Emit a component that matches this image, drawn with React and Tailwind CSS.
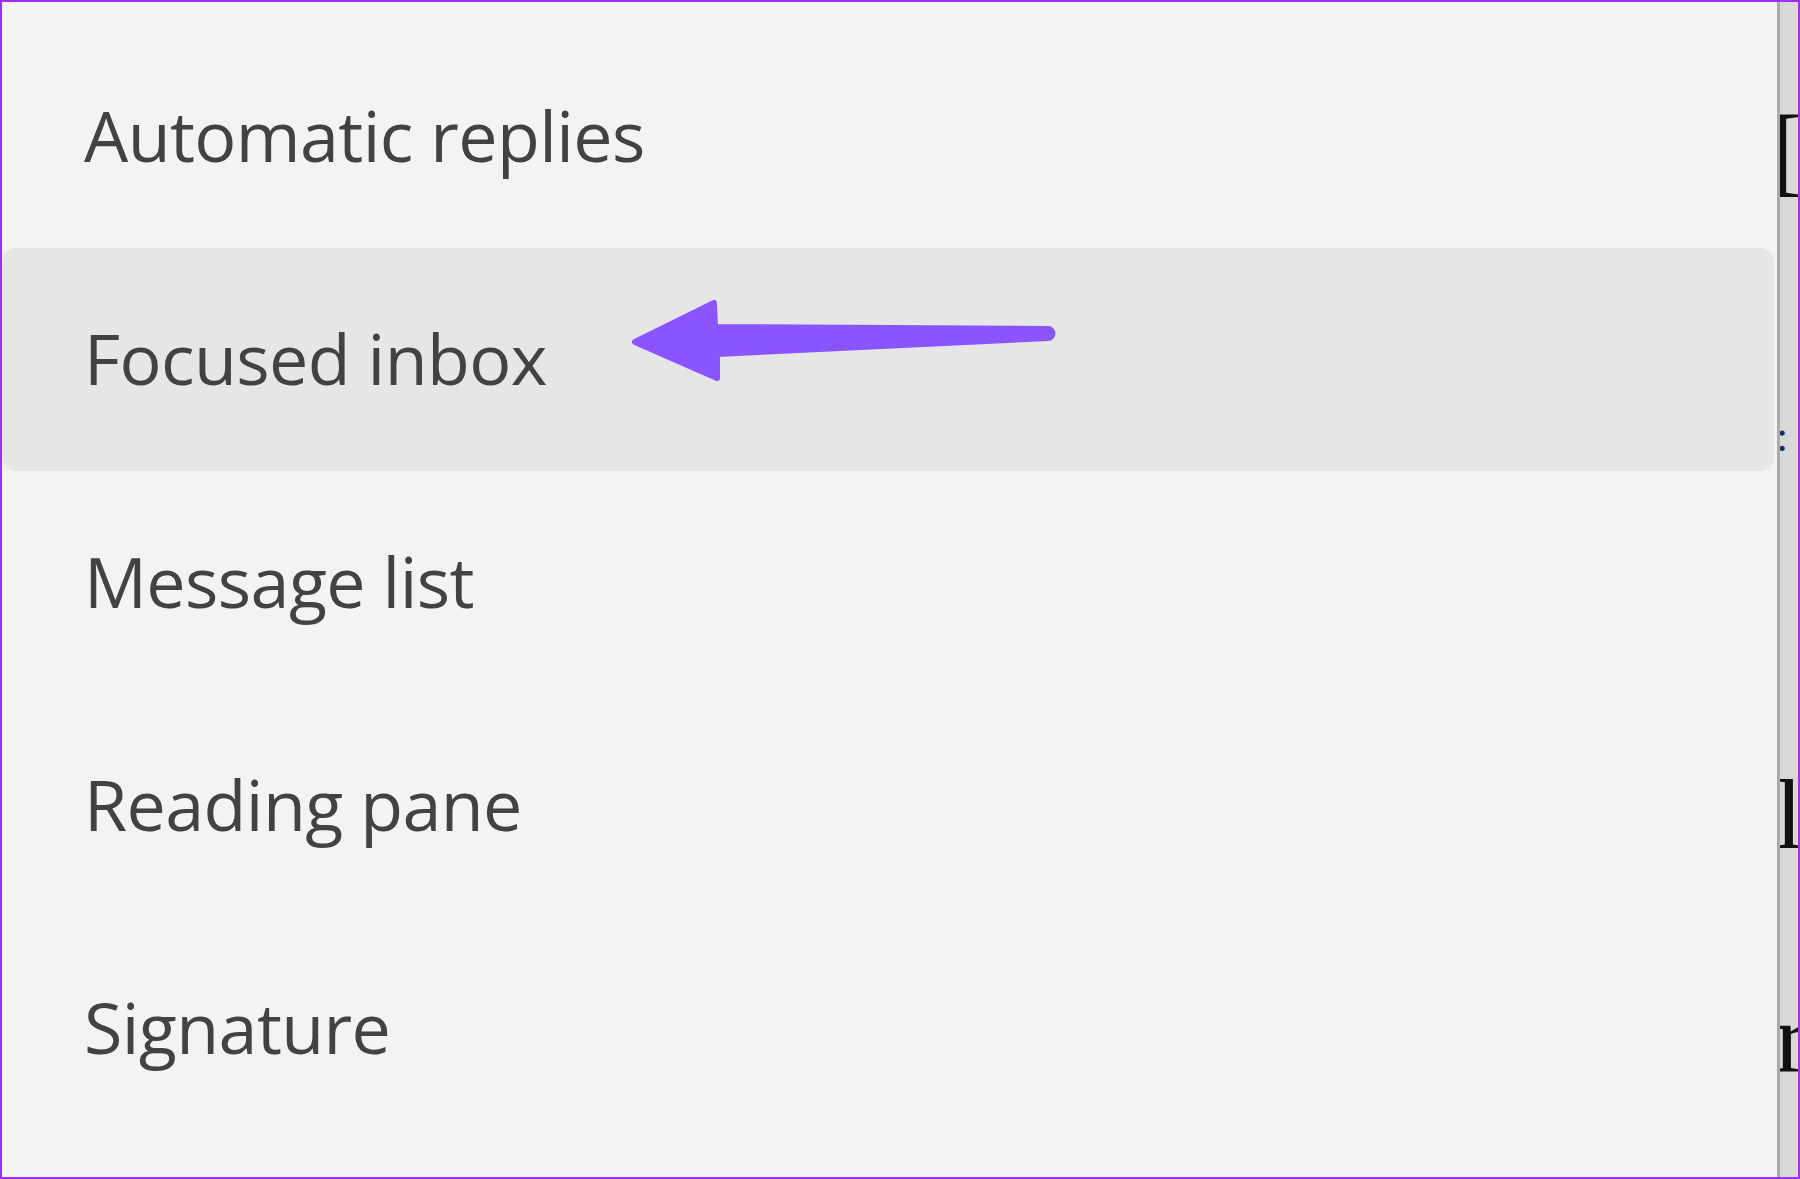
import React from "react";

const rows = ["Automatic replies", "Focused inbox", "Message list", "Reading pane", "Signature"];

const Arrow = () => (
  <svg className="absolute left-0 top-0 pointer-events-none" width="1100" height="224" viewBox="0 0 1100 224">
    <path
      d="M633 94 L712 55 L713 79 L1046 81 A4.5 4.5 0 0 1 1046 90 L715 106 L715 130 Z"
      fill="#8b55fd"
      stroke="#8b55fd"
      strokeWidth="6"
      strokeLinejoin="round"
    />
  </svg>
);

const SideStrip = () => (
  <div
    className="w-[21px] shrink-0 overflow-hidden bg-[#d8d8d8] border-l-[3px] border-[#ababab] flex flex-col text-[#111] leading-[100px] text-[100px]"
    style={{ fontFamily: '"Liberation Serif", serif' }}
  >
    <div className="mt-[99px] ml-[-9px]">[</div>
    <div className="mt-[214px] ml-[-4px] text-[44px] leading-[44px] text-[#1d2a5a]">:</div>
    <div className="mt-[306px] ml-[-5px]">l</div>
    <div className="mt-[124px] ml-[-5px]">r</div>
  </div>
);

export default function App() {
  return (
    <div className="w-[1800px] h-[1179px] border-2 border-[#a02ef6] bg-[#f3f3f3] flex overflow-hidden">
      <div className="flex-1 flex flex-col pt-[23px] pr-[3px]">
        {rows.map((label, i) => (
          <div
            key={label}
            className={
              "relative h-[223px] shrink-0 flex items-center pl-[82px] pb-[3px] rounded-[14px] " +
              (i === 1 ? "bg-[#e6e6e6]" : "")
            }
          >
            <span
              className="text-[70px] leading-none tracking-[-0.6px] text-[#424242]"
              style={{ fontFamily: '"Open Sans", sans-serif' }}
            >
              {label}
            </span>
            {i === 1 && <Arrow />}
          </div>
        ))}
      </div>
      <SideStrip />
    </div>
  );
}
